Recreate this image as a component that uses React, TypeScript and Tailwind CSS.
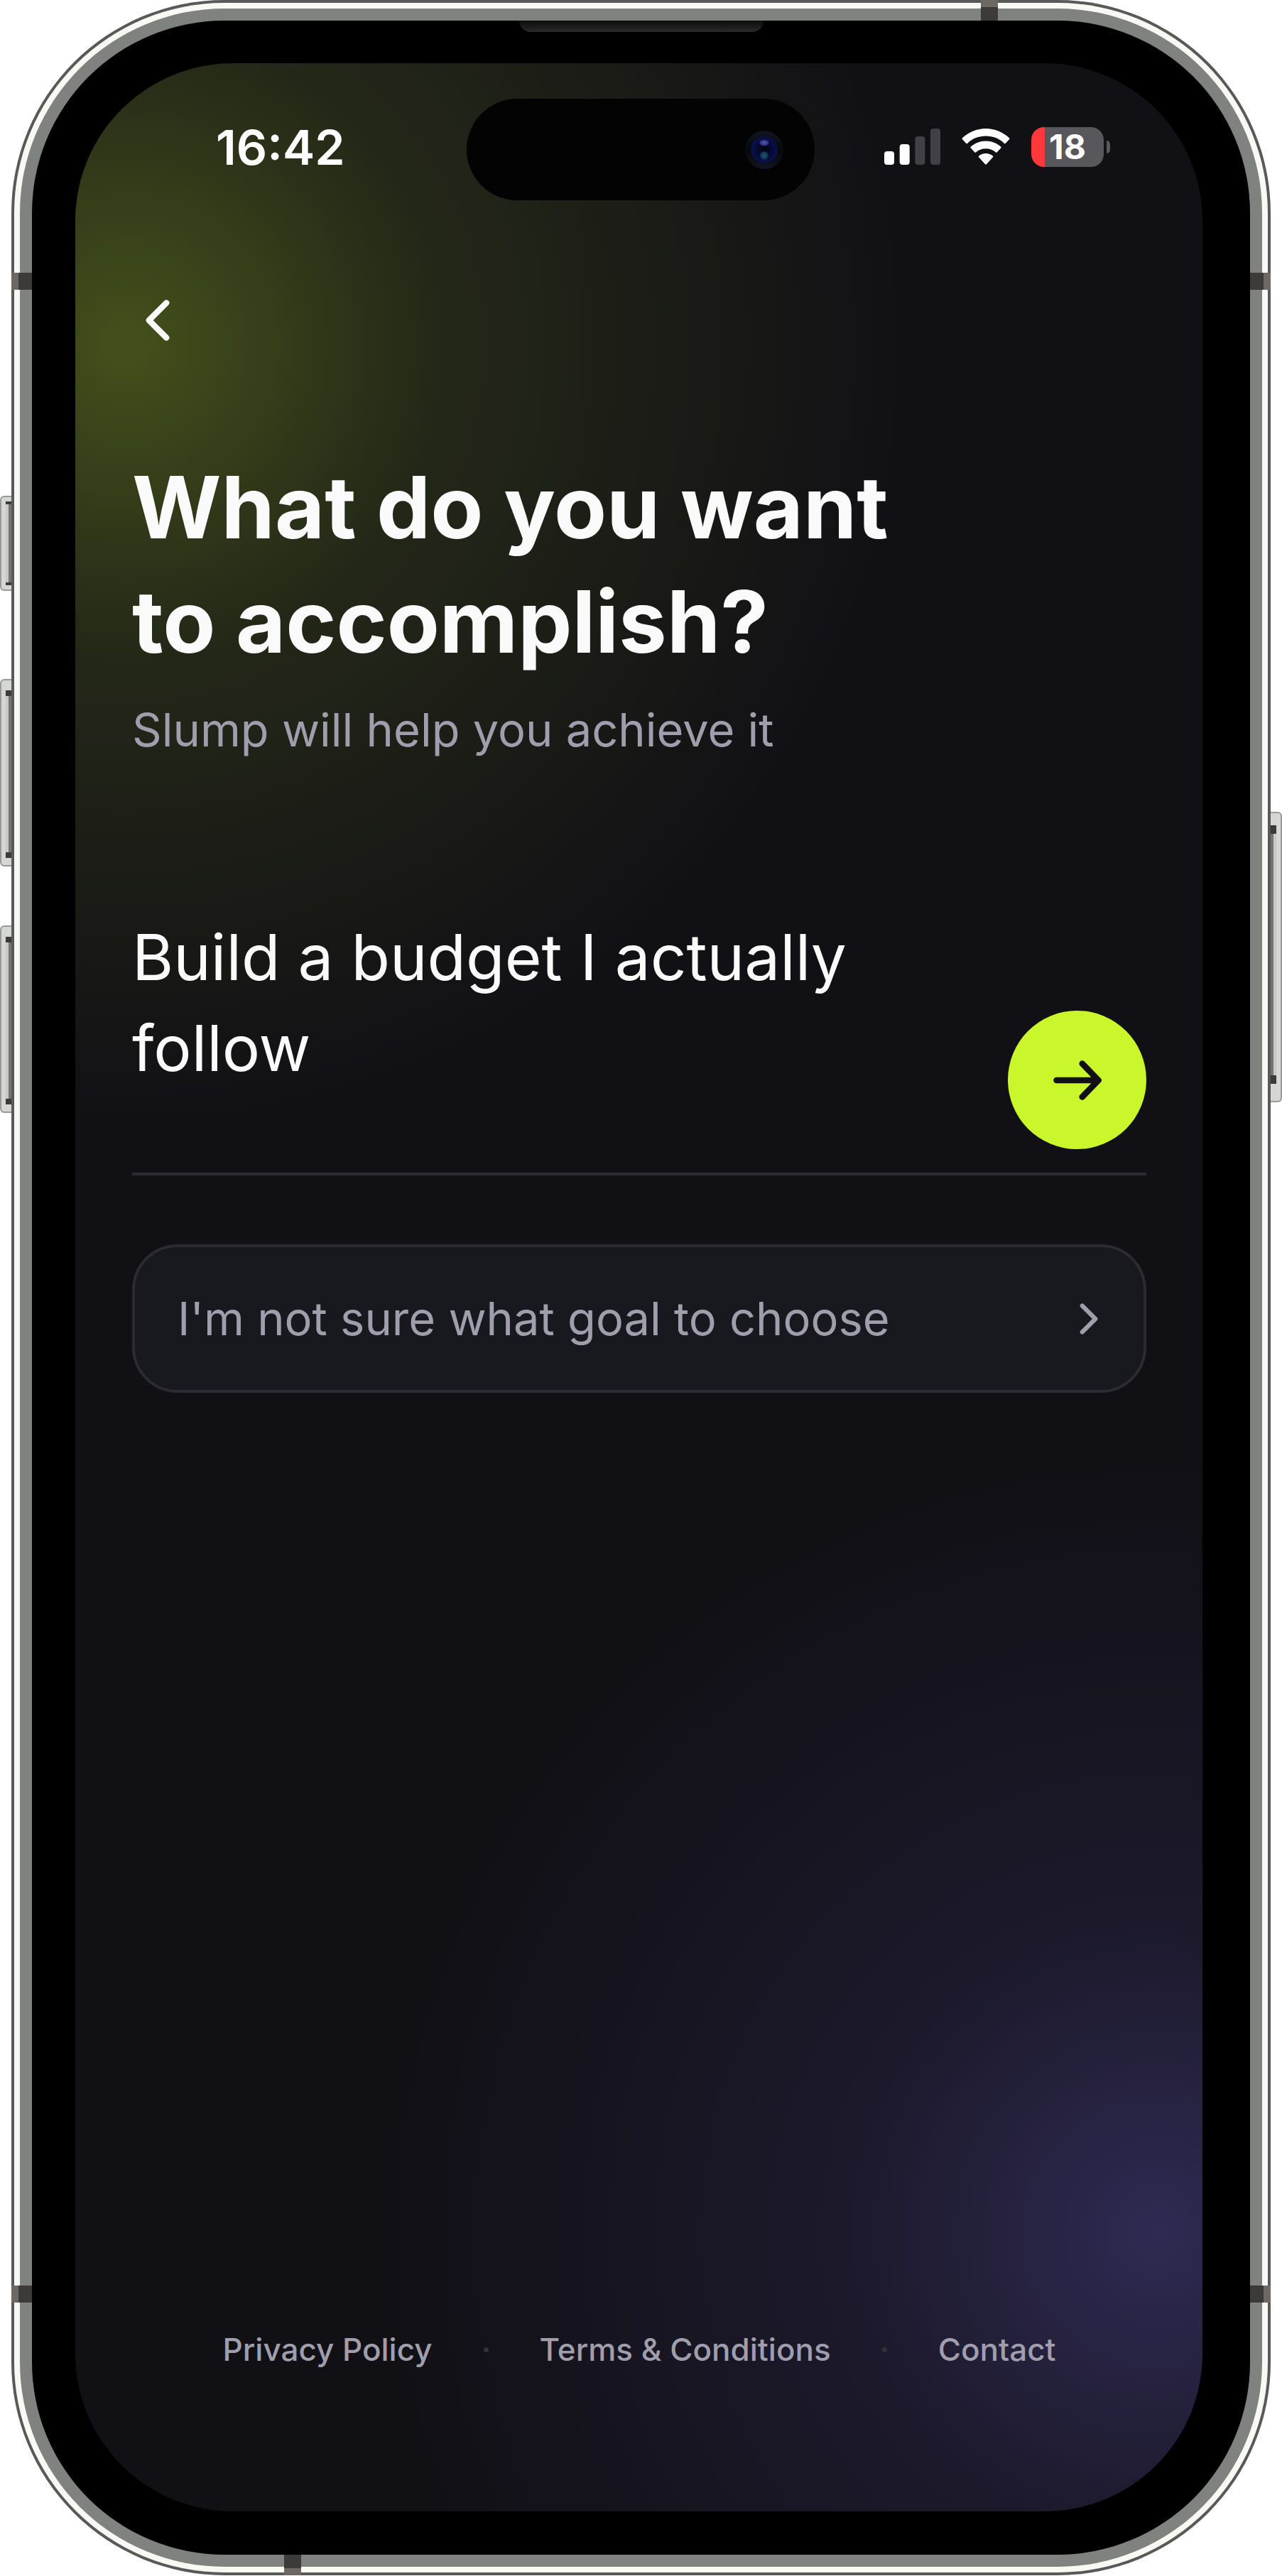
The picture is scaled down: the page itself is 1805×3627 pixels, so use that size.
import { ChevronLeft, ChevronRight } from 'lucide-react';
import { useState } from 'react';

const footerLinks = ['Privacy Policy', 'Terms & Conditions', 'Contact'];

interface SideButtonProps {
  side: 'left' | 'right';
  className: string;
  notch: string;
}

function SideButton({ side, className, notch }: SideButtonProps) {
  const left = side === 'left';
  return (
    <div
      className={`absolute flex w-4 border-y-2 border-[#979b98] bg-[#d5d7d5] ${
        left ? 'left-0 justify-end rounded-l-md border-l-2' : 'right-0 justify-start rounded-r-md border-r-2'
      } ${className}`}
    >
      <div className="flex w-2 flex-col">
        <div className={`bg-[#3a3c3a] ${notch}`} />
        <div
          className={`flex-1 from-[#c8c8c8] from-50% to-[#757575] to-50% ${left ? 'bg-linear-to-r' : 'bg-linear-to-l'}`}
        />
        <div className={`bg-[#3a3c3a] ${notch}`} />
      </div>
    </div>
  );
}

// Antenna bands crossing the metal frame
function Band({ className }: { className: string }) {
  return <div className={`absolute from-[#6d6864] from-33% to-[#3d3b39] to-33% ${className}`} />;
}

function Camera() {
  return (
    <svg viewBox="0 0 54 54" className="h-[54px] w-[54px]" aria-hidden="true">
      <defs>
        <linearGradient id="ring" x1="0" y1="0" x2="0" y2="1">
          <stop offset="0" stopColor="#121422" />
          <stop offset="0.5" stopColor="#06080c" />
          <stop offset="1" stopColor="#121422" />
        </linearGradient>
        <radialGradient id="lens">
          <stop offset="0" stopColor="#02020c" />
          <stop offset="1" stopColor="#081150" />
        </radialGradient>
        <radialGradient id="glintTop">
          <stop offset="0" stopColor="#5a55b0" />
          <stop offset="1" stopColor="#2d2a80" />
        </radialGradient>
        <radialGradient id="glintBottom">
          <stop offset="0" stopColor="#1f5a6c" />
          <stop offset="1" stopColor="#0b2a4a" />
        </radialGradient>
      </defs>
      <circle cx="27" cy="27" r="27" fill="url(#ring)" />
      <circle cx="27" cy="27" r="18.5" fill="url(#lens)" />
      <ellipse cx="27" cy="17" rx="6.5" ry="4.2" fill="url(#glintTop)" />
      <ellipse cx="27" cy="35" rx="6" ry="6" fill="url(#glintBottom)" />
    </svg>
  );
}

function StatusIcons() {
  return (
    <div className="flex items-center">
      <svg viewBox="0 0 79 51" className="h-[51px] w-[79px]" aria-hidden="true">
        <rect x="0" y="32" width="14" height="19" rx="4" fill="#fff" />
        <rect x="21.7" y="22" width="14" height="29" rx="4" fill="#fff" />
        <rect x="43.3" y="11" width="14" height="40" rx="4" fill="#414046" />
        <rect x="65" y="0" width="14" height="51" rx="4" fill="#414046" />
      </svg>
      <svg viewBox="0 0 66 51" preserveAspectRatio="none" className="ml-[30px] h-[51px] w-[68px]" fill="#fff" aria-hidden="true">
        <path d="M33 0C45 0 56.500 5 65 13.200q1 1 0 2l-5 5.600q-1 1-2 0C51.500 14 42.700 10.600 33 10.600S14.500 14 8 20.800q-1 1-2 0l-5-5.600q-1-1 0-2C9.500 5 21 0 33 0Z" />
        <path d="M33 17.500c7.800 0 15 3 20.500 8.100q1 1 0 2l-5.100 5.700q-1 1-2 0C42.600 30 38 28.300 33 28.300S23.400 30 19.600 33.300q-1 1-2 0l-5.100-5.700q-1-1 0-2C18 20.500 25.200 17.500 33 17.500Z" />
        <path d="M33 35c3.600 0 7 1.300 9.500 3.500q1 1 0 2l-8.600 9.700q-.9.900-1.800 0l-8.600-9.700q-1-1 0-2C26 36.300 29.400 35 33 35Z" />
      </svg>
      <div className="ml-[30px] flex h-14 w-[102px] items-center justify-center rounded-[18px] bg-linear-to-r from-[#ff383c] from-[19px] to-[#58575c] to-[19px] text-[48px] leading-none font-bold text-white">
        18
      </div>
      <div className="ml-1 h-[18px] w-[5px] rounded-r-full bg-[#58575c]" />
    </div>
  );
}

export default function App() {
  const [goal, setGoal] = useState('Build a budget I actually follow');

  return (
    <div className="relative flex min-h-screen flex-col bg-white px-4 pb-px font-['Inter',sans-serif]">
      <SideButton side="left" className="top-[698px] h-[134px] py-[6px]" notch="h-1" />
      <SideButton side="left" className="top-[956px] h-[264px] pt-[14px] pb-[10px]" notch="h-2" />
      <SideButton side="left" className="top-[1303px] h-[264px] pt-[14px] pb-[10px]" notch="h-2" />
      <SideButton side="right" className="top-[1143px] h-[409px] pt-[17px] pb-6" notch="h-3" />

      <div className="relative flex flex-1 flex-col rounded-[300px] bg-[#5a5959] p-1">
        <div className="flex flex-1 flex-col rounded-[296px] bg-[#f8f9f2] p-2">
          <div className="flex flex-1 flex-col rounded-[288px] bg-[#80827f] p-[17px]">
            <div className="relative flex flex-1 flex-col rounded-[271px] bg-black pt-[60px] pr-[67px] pb-[61px] pl-[61px]">
              <div className="absolute top-0 left-1/2 h-4 w-[344px] -translate-x-1/2 rounded-b-2xl bg-linear-to-b from-[#0c0c0c] to-[#2b2b2b]" />

              <main className="flex flex-1 flex-col rounded-[222px] bg-[#111015] bg-[radial-gradient(circle_1100px_at_72px_396px,rgba(201,247,44,0.28)_0%,rgba(201,247,44,0.1)_40%,rgba(201,247,44,0)_100%),radial-gradient(circle_1090px_at_96%_3054px,rgba(123,108,240,0.28)_0%,rgba(123,108,240,0.1)_40%,rgba(123,108,240,0)_100%)] pr-[79px] pl-20">
                <header className="mt-[50px] flex h-[143px] items-center">
                  <time className="w-[471px] pb-2 pl-[118px] text-[68px] leading-none font-semibold text-white">16:42</time>
                  <div className="flex h-full w-[490px] items-center justify-end rounded-full bg-[#030303] pr-11">
                    <Camera />
                  </div>
                  <div className="ml-[98px] pb-2">
                    <StatusIcons />
                  </div>
                </header>

                <button aria-label="Back" className="mt-[120px] flex h-[98px] w-[72px] items-center justify-center text-[#fafafa]">
                  <ChevronLeft className="h-[98px] w-[98px] shrink-0" />
                </button>

                <h1 className="mt-[134px] text-[121px] leading-[161px] font-bold text-[#fafafa]">
                  What do you want
                  <br />
                  to accomplish?
                </h1>
                <p className="mt-6 text-[65px] leading-[96px] text-[#a09eac]">Slump will help you achieve it</p>

                <form
                  className="mt-[208px] flex items-end border-b-4 border-[#2c2b33] pb-[33px]"
                  onSubmit={(e) => e.preventDefault()}
                >
                  <textarea
                    aria-label="Your goal"
                    rows={2}
                    value={goal}
                    onChange={(e) => setGoal(e.target.value)}
                    className="mb-[78px] block min-w-0 flex-1 resize-none overflow-hidden bg-transparent text-[89px] leading-[128px] text-[#fafafa] outline-none"
                  />
                  <button
                    aria-label="Continue"
                    className="flex h-[195px] w-[195px] items-center justify-center rounded-full bg-[#c9f72c] text-[#111015]"
                  >
                    <svg
                      viewBox="0 0 68 56"
                      className="h-14 w-[68px]"
                      fill="none"
                      stroke="currentColor"
                      strokeWidth="8.6"
                      strokeLinecap="round"
                      strokeLinejoin="round"
                      aria-hidden="true"
                    >
                      <path d="M4.500 28H63M40.700 4.500 63.500 28 40.700 51.500" />
                    </svg>
                  </button>
                </form>

                <button className="mt-[97px] flex h-[209px] items-center justify-between rounded-[64px] border-4 border-[#2c2b33] bg-[#18191e] pr-10 pl-[60px] text-[65px] text-[#a09eac]">
                  I'm not sure what goal to choose
                  <ChevronRight className="h-[74px] w-[74px]" />
                </button>

                <footer className="mt-auto mb-48 flex items-center justify-center gap-[72px] text-[44px] leading-[72px] font-medium text-[#a09eac]">
                  {footerLinks.map((label, i) => (
                    <span key={label} className="contents">
                      {i > 0 && <span className="h-[7px] w-[7px] rounded-full bg-[#323237]" />}
                      <a href="#">{label}</a>
                    </span>
                  ))}
                </footer>
              </main>
            </div>
          </div>
        </div>

        <Band className="top-[384px] left-0 h-6 w-[29px] bg-linear-to-r" />
        <Band className="top-[384px] right-0 h-6 w-[29px] bg-linear-to-l" />
        <Band className="bottom-[384px] left-0 h-6 w-[29px] bg-linear-to-r" />
        <Band className="right-0 bottom-[384px] h-6 w-[29px] bg-linear-to-l" />
        <Band className="top-0 right-[384px] h-[29px] w-6 bg-linear-to-b" />
        <Band className="bottom-0 left-[384px] h-[29px] w-6 bg-linear-to-t" />
      </div>
    </div>
  );
}
